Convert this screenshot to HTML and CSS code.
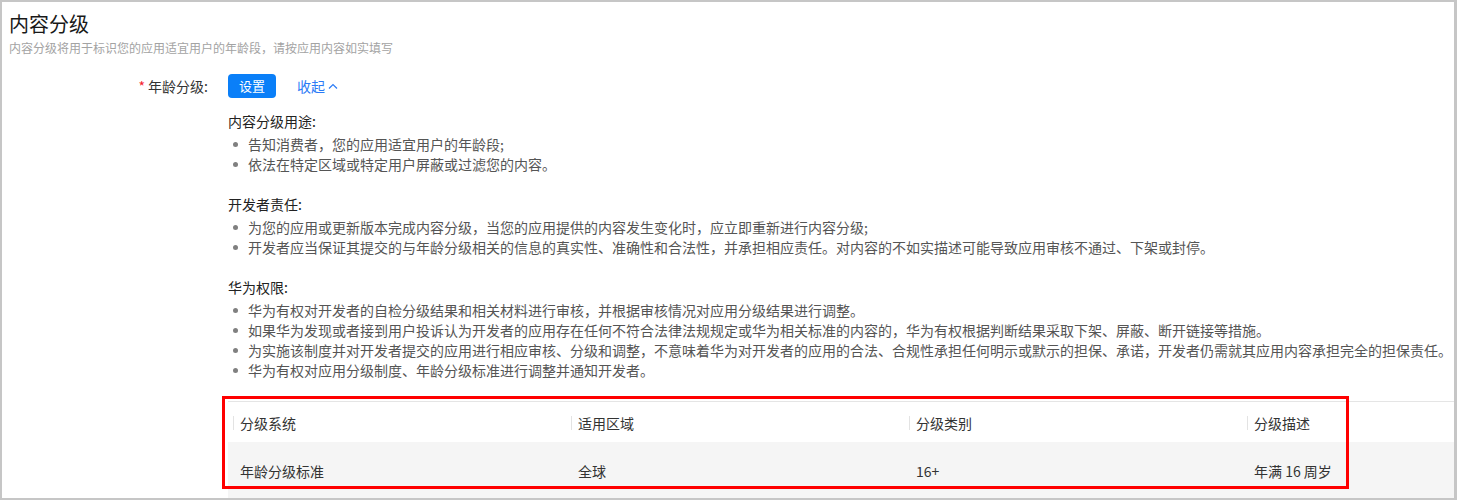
FILE: index.html
```html
<!DOCTYPE html>
<html>
<head>
  <title>内容分级</title>
  <meta charset='utf-8'>
  <meta name="viewport" content="width=device-width, initial-scale=1">
  <link rel="stylesheet" href="styles.css">
</head>
<body>

  <div class="page">
    <h1 class="title">内容分级</h1>
    <p class="subtitle">内容分级将用于标识您的应用适宜用户的年龄段，请按应用内容如实填写</p>

    <div class="form-row">
      <label class="label"><span class="required">*</span> 年龄分级:</label>
      <div class="field">
        <div class="actions">
          <button class="btn">设置</button>
          <a href="#" class="toggle">收起
            <svg width="10" height="6" viewBox="0 0 10 6"><polyline points="1,5.5 5,1.5 9,5.5" fill="none" stroke="currentColor" stroke-width="1.2"/></svg>
          </a>
        </div>

        <div class="section">
          <h3 class="section-title">内容分级用途:</h3>
          <ul class="points">
            <li>告知消费者，您的应用适宜用户的年龄段;</li>
            <li>依法在特定区域或特定用户屏蔽或过滤您的内容。</li>
          </ul>
        </div>

        <div class="section">
          <h3 class="section-title">开发者责任:</h3>
          <ul class="points">
            <li>为您的应用或更新版本完成内容分级，当您的应用提供的内容发生变化时，应立即重新进行内容分级;</li>
            <li>开发者应当保证其提交的与年龄分级相关的信息的真实性、准确性和合法性，并承担相应责任。对内容的不如实描述可能导致应用审核不通过、下架或封停。</li>
          </ul>
        </div>

        <div class="section">
          <h3 class="section-title">华为权限:</h3>
          <ul class="points">
            <li>华为有权对开发者的自检分级结果和相关材料进行审核，并根据审核情况对应用分级结果进行调整。</li>
            <li>如果华为发现或者接到用户投诉认为开发者的应用存在任何不符合法律法规规定或华为相关标准的内容的，华为有权根据判断结果采取下架、屏蔽、断开链接等措施。</li>
            <li>为实施该制度并对开发者提交的应用进行相应审核、分级和调整，不意味着华为对开发者的应用的合法、合规性承担任何明示或默示的担保、承诺，开发者仍需就其应用内容承担完全的担保责任。</li>
            <li>华为有权对应用分级制度、年龄分级标准进行调整并通知开发者。</li>
          </ul>
        </div>

        <div class="rating-table">
          <div class="row head">
            <div class="cell">分级系统</div>
            <div class="cell">适用区域</div>
            <div class="cell">分级类别</div>
            <div class="cell">分级描述</div>
          </div>
          <div class="row body">
            <div class="cell">年龄分级标准</div>
            <div class="cell">全球</div>
            <div class="cell">16+</div>
            <div class="cell">年满 16 周岁</div>
          </div>
          <div class="highlight"></div>
        </div>
      </div>
    </div>
  </div>

</body>
</html>
```

FILE: styles.css
```css
* {
  box-sizing: border-box;
}
html, body {
  margin: 0;
  background: white;
}
body {
  font-family: "Noto Sans CJK SC", "Liberation Sans", sans-serif;
  color: #333;
}
.page {
  border: 2px solid #c6c6c6;
  border-right-width: 3px;
  height: 500px;
  overflow: hidden;
  padding: 8px 0 0 7px;
}
.title {
  color: #191919;
  font-size: 20px;
  font-weight: normal;
  line-height: 28px;
  margin: 0;
}
.subtitle {
  color: #a3a3a3;
  font-size: 12px;
  line-height: 16px;
  margin: 2px 0 0;
}
.form-row {
  display: flex;
  margin-top: 18px;
}
.label {
  color: #333;
  flex: none;
  font-size: 14px;
  line-height: 24px;
  text-align: right;
  width: 199px;
}
.required {
  color: #f5222d;
}
.field {
  flex: 1;
  margin-left: 20px;
  min-width: 0;
}
.actions {
  align-items: center;
  display: flex;
  gap: 21px;
}
.btn {
  background: #0a7ff8;
  border: none;
  border-radius: 4px;
  color: white;
  font-family: inherit;
  font-size: 13px;
  height: 24px;
  line-height: 24px;
  padding: 0;
  width: 48px;
}
.toggle {
  align-items: center;
  color: #2b7bf6;
  display: flex;
  font-size: 14px;
  gap: 3px;
  line-height: 24px;
  text-decoration: none;
}
.section {
  margin-top: 13px;
}
.section + .section {
  margin-top: 20px;
}
.section-title {
  color: #222;
  font-size: 14px;
  font-weight: normal;
  line-height: 20px;
  margin: 0 0 3px;
}
.points {
  list-style: none;
  margin: 0;
  padding: 0;
}
.points li {
  color: #555;
  display: flex;
  font-size: 14px;
  line-height: 20px;
  white-space: nowrap;
}
.points li::before {
  background: #808080;
  border-radius: 50%;
  content: "";
  flex: none;
  height: 5px;
  margin: 8px 10px 0 5px;
  width: 5px;
}
.rating-table {
  border-top: 1px solid #e5e5e5;
  margin-top: 21px;
  position: relative;
  width: 1352px;
}
.row {
  display: grid;
  grid-template-columns: repeat(4, 338px);
}
.row.head {
  height: 40px;
}
.row.body {
  background: #f5f5f5;
  height: 56px;
}
.cell {
  align-items: center;
  color: #333;
  display: flex;
  font-size: 14px;
  padding-left: 12px;
}
.head .cell {
  padding: 2px 0 0 5px;
}
.head .cell::before {
  background: #e3e3e3;
  content: "";
  height: 14px;
  margin-right: 6px;
  width: 1px;
}
.body .cell {
  padding-top: 1px;
}
.highlight {
  border: 3px solid #ff0000;
  height: 93px;
  left: -6px;
  pointer-events: none;
  position: absolute;
  top: -6px;
  width: 1127px;
}
```
